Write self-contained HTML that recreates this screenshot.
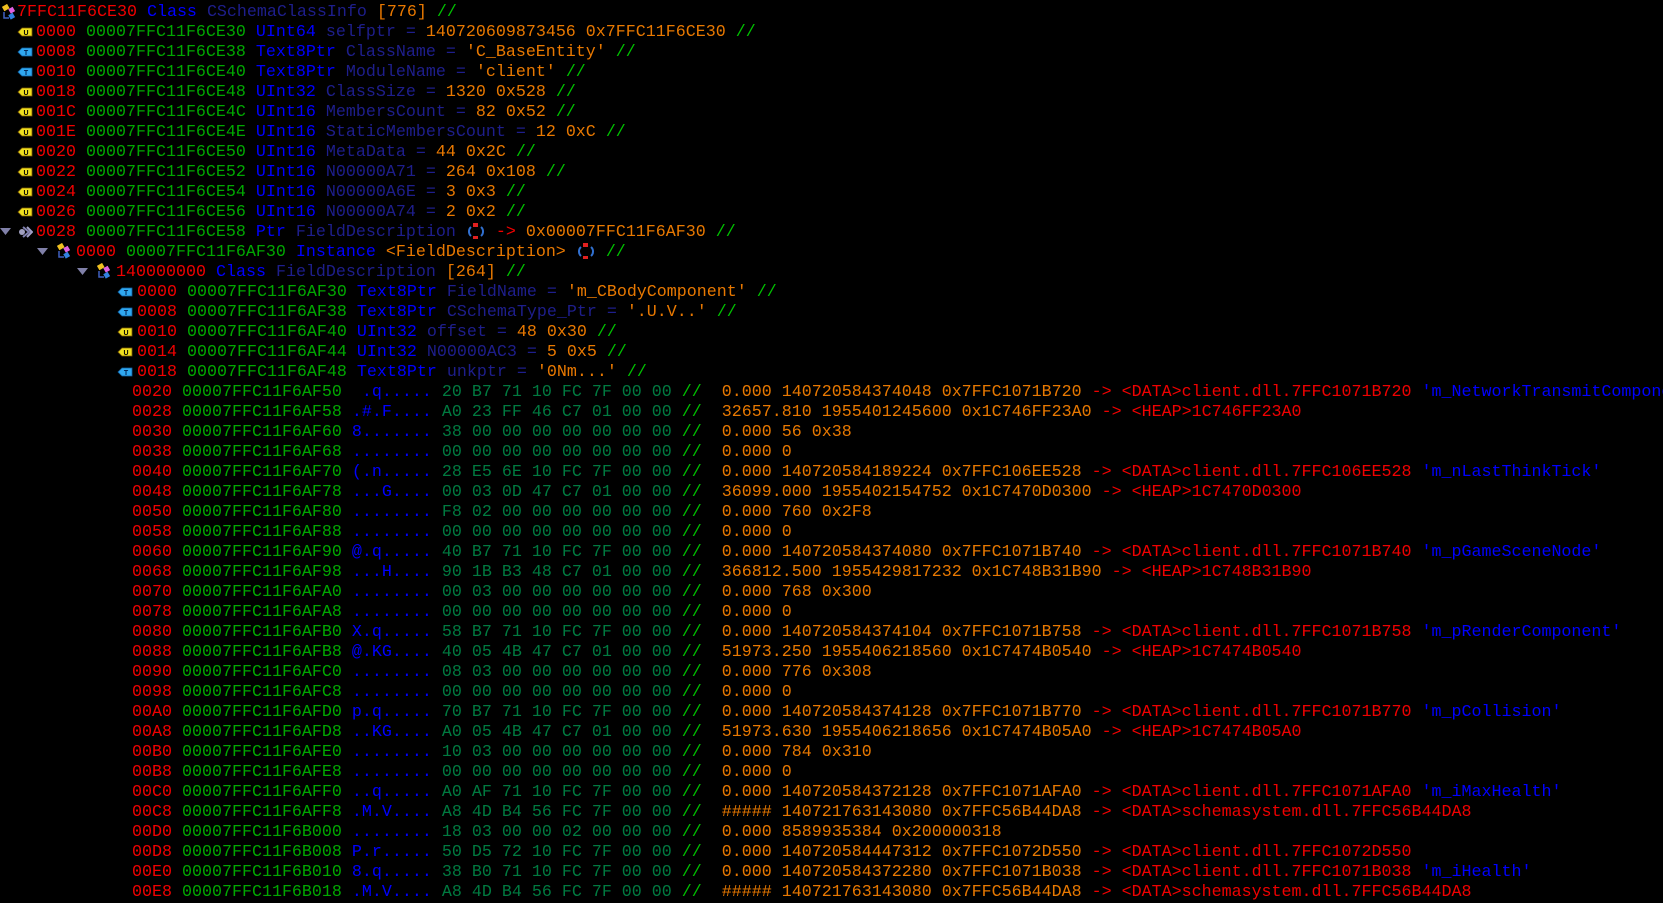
<!DOCTYPE html>
<html><head><meta charset="utf-8"><style>
html,body{margin:0;padding:0;background:#000;width:1663px;height:892px;overflow:hidden}
.row{position:absolute;margin-top:1px;height:20px;line-height:20px;white-space:pre;font-family:"Liberation Mono","Courier New",monospace;font-size:16.67px;color:#1e1e8c}
.r{color:#f00000}.g{color:#00a800}.b{color:#0000ff}.n{color:#1e1e8c}.o{color:#e87800}.c{color:#00c000}.h{color:#007a40}
.ic{position:absolute;width:16px;height:16px}
svg{display:block}
.inl{display:inline-block;width:20px;height:16px;vertical-align:-3px}
.x{left:132px}
</style></head><body>
<svg width="0" height="0" style="position:absolute"><defs>
<g id="U"><path d="M1 5 L5 1 H15 V9 H5 Z" fill="#f0e020" stroke="#806000" stroke-width="0.8"/><text x="9" y="8" font-size="7" font-family="Liberation Sans" font-weight="bold" fill="#000" text-anchor="middle">U</text></g>
<g id="T"><path d="M1 5 L5 1 H15 V9 H5 Z" fill="#30a8f0" stroke="#1060a0" stroke-width="0.8"/><text x="9" y="8" font-size="7" font-family="Liberation Sans" font-weight="bold" fill="#002050" text-anchor="middle">T</text></g>
<g id="C"><rect x="3" y="1" width="6" height="5" fill="#f0c020" transform="rotate(-30 6 4)"/><rect x="9" y="4" width="5" height="5" fill="#e060e0" transform="rotate(-30 11 6)"/><path d="M4 8 V14 H9" stroke="#4060c0" fill="none" stroke-width="1.5"/><rect x="9" y="10" width="5" height="5" fill="#3080e0" transform="rotate(-30 11 12)"/></g>
<g id="V"><path d="M0 4 H11 L5.5 11 Z" fill="#8080a8"/></g>
<g id="P"><circle cx="5" cy="8" r="3" fill="#a0a0c0"/><path d="M6 3 L12 8 L6 13" stroke="#8080b0" stroke-width="2" fill="none"/><path d="M10 3 L15 8 L10 13" stroke="#a0a0c8" stroke-width="2" fill="none"/></g>
<g id="R"><path d="M5 4 A6 6 0 0 0 5 13" stroke="#3070d0" stroke-width="2" fill="none"/><path d="M15 4 A6 6 0 0 1 15 13" stroke="#3070d0" stroke-width="2" fill="none"/><rect x="7" y="0" width="5" height="4" fill="#e02020"/><rect x="7" y="13" width="5" height="4" fill="#e02020"/></g>
</defs></svg>

<svg class="ic" style="left:0;top:4px"><use href="#C"/></svg>
<div class="row" style="left:17px;top:2px"><span class="r">7FFC11F6CE30</span> <span class="b">Class</span> <span class="n">CSchemaClassInfo</span> <span class="o">[776]</span> <span class="c">//</span></div>

<svg class="ic" style="left:17px;top:27px"><use href="#U"/></svg>
<div class="row" style="left:36px;top:22px"><span class="r">0000</span> <span class="g">00007FFC11F6CE30</span> <span class="b">UInt64</span> <span class="n">selfptr =</span> <span class="o">140720609873456 0x7FFC11F6CE30</span> <span class="c">//</span></div>
<svg class="ic" style="left:17px;top:47px"><use href="#T"/></svg>
<div class="row" style="left:36px;top:42px"><span class="r">0008</span> <span class="g">00007FFC11F6CE38</span> <span class="b">Text8Ptr</span> <span class="n">ClassName =</span> <span class="o">'C_BaseEntity'</span> <span class="c">//</span></div>
<svg class="ic" style="left:17px;top:67px"><use href="#T"/></svg>
<div class="row" style="left:36px;top:62px"><span class="r">0010</span> <span class="g">00007FFC11F6CE40</span> <span class="b">Text8Ptr</span> <span class="n">ModuleName =</span> <span class="o">'client'</span> <span class="c">//</span></div>
<svg class="ic" style="left:17px;top:87px"><use href="#U"/></svg>
<div class="row" style="left:36px;top:82px"><span class="r">0018</span> <span class="g">00007FFC11F6CE48</span> <span class="b">UInt32</span> <span class="n">ClassSize =</span> <span class="o">1320 0x528</span> <span class="c">//</span></div>
<svg class="ic" style="left:17px;top:107px"><use href="#U"/></svg>
<div class="row" style="left:36px;top:102px"><span class="r">001C</span> <span class="g">00007FFC11F6CE4C</span> <span class="b">UInt16</span> <span class="n">MembersCount =</span> <span class="o">82 0x52</span> <span class="c">//</span></div>
<svg class="ic" style="left:17px;top:127px"><use href="#U"/></svg>
<div class="row" style="left:36px;top:122px"><span class="r">001E</span> <span class="g">00007FFC11F6CE4E</span> <span class="b">UInt16</span> <span class="n">StaticMembersCount =</span> <span class="o">12 0xC</span> <span class="c">//</span></div>
<svg class="ic" style="left:17px;top:147px"><use href="#U"/></svg>
<div class="row" style="left:36px;top:142px"><span class="r">0020</span> <span class="g">00007FFC11F6CE50</span> <span class="b">UInt16</span> <span class="n">MetaData =</span> <span class="o">44 0x2C</span> <span class="c">//</span></div>
<svg class="ic" style="left:17px;top:167px"><use href="#U"/></svg>
<div class="row" style="left:36px;top:162px"><span class="r">0022</span> <span class="g">00007FFC11F6CE52</span> <span class="b">UInt16</span> <span class="n">N00000A71 =</span> <span class="o">264 0x108</span> <span class="c">//</span></div>
<svg class="ic" style="left:17px;top:187px"><use href="#U"/></svg>
<div class="row" style="left:36px;top:182px"><span class="r">0024</span> <span class="g">00007FFC11F6CE54</span> <span class="b">UInt16</span> <span class="n">N00000A6E =</span> <span class="o">3 0x3</span> <span class="c">//</span></div>
<svg class="ic" style="left:17px;top:207px"><use href="#U"/></svg>
<div class="row" style="left:36px;top:202px"><span class="r">0026</span> <span class="g">00007FFC11F6CE56</span> <span class="b">UInt16</span> <span class="n">N00000A74 =</span> <span class="o">2 0x2</span> <span class="c">//</span></div>

<svg class="ic" style="left:0;top:224px"><use href="#V"/></svg>
<svg class="ic" style="left:17px;top:224px"><use href="#P"/></svg>
<div class="row" style="left:36px;top:222px"><span class="r">0028</span> <span class="g">00007FFC11F6CE58</span> <span class="b">Ptr</span> <span class="n">FieldDescription</span> <svg class="inl"><use href="#R"/></svg> <span class="r">-&gt;</span> <span class="o">0x00007FFC11F6AF30</span> <span class="c">//</span></div>

<svg class="ic" style="left:37px;top:244px"><use href="#V"/></svg>
<svg class="ic" style="left:55px;top:243px"><use href="#C"/></svg>
<div class="row" style="left:76px;top:242px"><span class="r">0000</span> <span class="g">00007FFC11F6AF30</span> <span class="b">Instance</span> <span class="o">&lt;FieldDescription&gt;</span> <svg class="inl"><use href="#R"/></svg> <span class="c">//</span></div>

<svg class="ic" style="left:77px;top:264px"><use href="#V"/></svg>
<svg class="ic" style="left:95px;top:263px"><use href="#C"/></svg>
<div class="row" style="left:116px;top:262px"><span class="r">140000000</span> <span class="b">Class</span> <span class="n">FieldDescription</span> <span class="o">[264]</span> <span class="c">//</span></div>

<svg class="ic" style="left:117px;top:287px"><use href="#T"/></svg>
<div class="row" style="left:137px;top:282px"><span class="r">0000</span> <span class="g">00007FFC11F6AF30</span> <span class="b">Text8Ptr</span> <span class="n">FieldName =</span> <span class="o">'m_CBodyComponent'</span> <span class="c">//</span></div>
<svg class="ic" style="left:117px;top:307px"><use href="#T"/></svg>
<div class="row" style="left:137px;top:302px"><span class="r">0008</span> <span class="g">00007FFC11F6AF38</span> <span class="b">Text8Ptr</span> <span class="n">CSchemaType_Ptr =</span> <span class="o">'.U.V..'</span> <span class="c">//</span></div>
<svg class="ic" style="left:117px;top:327px"><use href="#U"/></svg>
<div class="row" style="left:137px;top:322px"><span class="r">0010</span> <span class="g">00007FFC11F6AF40</span> <span class="b">UInt32</span> <span class="n">offset =</span> <span class="o">48 0x30</span> <span class="c">//</span></div>
<svg class="ic" style="left:117px;top:347px"><use href="#U"/></svg>
<div class="row" style="left:137px;top:342px"><span class="r">0014</span> <span class="g">00007FFC11F6AF44</span> <span class="b">UInt32</span> <span class="n">N00000AC3 =</span> <span class="o">5 0x5</span> <span class="c">//</span></div>
<svg class="ic" style="left:117px;top:367px"><use href="#T"/></svg>
<div class="row" style="left:137px;top:362px"><span class="r">0018</span> <span class="g">00007FFC11F6AF48</span> <span class="b">Text8Ptr</span> <span class="n">unkptr =</span> <span class="o">'0Nm...'</span> <span class="c">//</span></div>

<div class="row x" style="top:382px"><span class="r">0020</span> <span class="g">00007FFC11F6AF50</span> <span class="b"> .q.....</span> <span class="h">20 B7 71 10 FC 7F 00 00</span> <span class="c">//</span>  <span class="o">0.000 140720584374048 0x7FFC1071B720</span> <span class="r">-&gt; &lt;DATA&gt;client.dll.7FFC1071B720</span> <span class="b">'m_NetworkTransmitComponent'</span></div>
<div class="row x" style="top:402px"><span class="r">0028</span> <span class="g">00007FFC11F6AF58</span> <span class="b">.#.F....</span> <span class="h">A0 23 FF 46 C7 01 00 00</span> <span class="c">//</span>  <span class="o">32657.810 1955401245600 0x1C746FF23A0</span> <span class="r">-&gt; &lt;HEAP&gt;1C746FF23A0</span></div>
<div class="row x" style="top:422px"><span class="r">0030</span> <span class="g">00007FFC11F6AF60</span> <span class="b">8.......</span> <span class="h">38 00 00 00 00 00 00 00</span> <span class="c">//</span>  <span class="o">0.000 56 0x38</span></div>
<div class="row x" style="top:442px"><span class="r">0038</span> <span class="g">00007FFC11F6AF68</span> <span class="b">........</span> <span class="h">00 00 00 00 00 00 00 00</span> <span class="c">//</span>  <span class="o">0.000 0</span></div>
<div class="row x" style="top:462px"><span class="r">0040</span> <span class="g">00007FFC11F6AF70</span> <span class="b">(.n.....</span> <span class="h">28 E5 6E 10 FC 7F 00 00</span> <span class="c">//</span>  <span class="o">0.000 140720584189224 0x7FFC106EE528</span> <span class="r">-&gt; &lt;DATA&gt;client.dll.7FFC106EE528</span> <span class="b">'m_nLastThinkTick'</span></div>
<div class="row x" style="top:482px"><span class="r">0048</span> <span class="g">00007FFC11F6AF78</span> <span class="b">...G....</span> <span class="h">00 03 0D 47 C7 01 00 00</span> <span class="c">//</span>  <span class="o">36099.000 1955402154752 0x1C7470D0300</span> <span class="r">-&gt; &lt;HEAP&gt;1C7470D0300</span></div>
<div class="row x" style="top:502px"><span class="r">0050</span> <span class="g">00007FFC11F6AF80</span> <span class="b">........</span> <span class="h">F8 02 00 00 00 00 00 00</span> <span class="c">//</span>  <span class="o">0.000 760 0x2F8</span></div>
<div class="row x" style="top:522px"><span class="r">0058</span> <span class="g">00007FFC11F6AF88</span> <span class="b">........</span> <span class="h">00 00 00 00 00 00 00 00</span> <span class="c">//</span>  <span class="o">0.000 0</span></div>
<div class="row x" style="top:542px"><span class="r">0060</span> <span class="g">00007FFC11F6AF90</span> <span class="b">@.q.....</span> <span class="h">40 B7 71 10 FC 7F 00 00</span> <span class="c">//</span>  <span class="o">0.000 140720584374080 0x7FFC1071B740</span> <span class="r">-&gt; &lt;DATA&gt;client.dll.7FFC1071B740</span> <span class="b">'m_pGameSceneNode'</span></div>
<div class="row x" style="top:562px"><span class="r">0068</span> <span class="g">00007FFC11F6AF98</span> <span class="b">...H....</span> <span class="h">90 1B B3 48 C7 01 00 00</span> <span class="c">//</span>  <span class="o">366812.500 1955429817232 0x1C748B31B90</span> <span class="r">-&gt; &lt;HEAP&gt;1C748B31B90</span></div>
<div class="row x" style="top:582px"><span class="r">0070</span> <span class="g">00007FFC11F6AFA0</span> <span class="b">........</span> <span class="h">00 03 00 00 00 00 00 00</span> <span class="c">//</span>  <span class="o">0.000 768 0x300</span></div>
<div class="row x" style="top:602px"><span class="r">0078</span> <span class="g">00007FFC11F6AFA8</span> <span class="b">........</span> <span class="h">00 00 00 00 00 00 00 00</span> <span class="c">//</span>  <span class="o">0.000 0</span></div>
<div class="row x" style="top:622px"><span class="r">0080</span> <span class="g">00007FFC11F6AFB0</span> <span class="b">X.q.....</span> <span class="h">58 B7 71 10 FC 7F 00 00</span> <span class="c">//</span>  <span class="o">0.000 140720584374104 0x7FFC1071B758</span> <span class="r">-&gt; &lt;DATA&gt;client.dll.7FFC1071B758</span> <span class="b">'m_pRenderComponent'</span></div>
<div class="row x" style="top:642px"><span class="r">0088</span> <span class="g">00007FFC11F6AFB8</span> <span class="b">@.KG....</span> <span class="h">40 05 4B 47 C7 01 00 00</span> <span class="c">//</span>  <span class="o">51973.250 1955406218560 0x1C7474B0540</span> <span class="r">-&gt; &lt;HEAP&gt;1C7474B0540</span></div>
<div class="row x" style="top:662px"><span class="r">0090</span> <span class="g">00007FFC11F6AFC0</span> <span class="b">........</span> <span class="h">08 03 00 00 00 00 00 00</span> <span class="c">//</span>  <span class="o">0.000 776 0x308</span></div>
<div class="row x" style="top:682px"><span class="r">0098</span> <span class="g">00007FFC11F6AFC8</span> <span class="b">........</span> <span class="h">00 00 00 00 00 00 00 00</span> <span class="c">//</span>  <span class="o">0.000 0</span></div>
<div class="row x" style="top:702px"><span class="r">00A0</span> <span class="g">00007FFC11F6AFD0</span> <span class="b">p.q.....</span> <span class="h">70 B7 71 10 FC 7F 00 00</span> <span class="c">//</span>  <span class="o">0.000 140720584374128 0x7FFC1071B770</span> <span class="r">-&gt; &lt;DATA&gt;client.dll.7FFC1071B770</span> <span class="b">'m_pCollision'</span></div>
<div class="row x" style="top:722px"><span class="r">00A8</span> <span class="g">00007FFC11F6AFD8</span> <span class="b">..KG....</span> <span class="h">A0 05 4B 47 C7 01 00 00</span> <span class="c">//</span>  <span class="o">51973.630 1955406218656 0x1C7474B05A0</span> <span class="r">-&gt; &lt;HEAP&gt;1C7474B05A0</span></div>
<div class="row x" style="top:742px"><span class="r">00B0</span> <span class="g">00007FFC11F6AFE0</span> <span class="b">........</span> <span class="h">10 03 00 00 00 00 00 00</span> <span class="c">//</span>  <span class="o">0.000 784 0x310</span></div>
<div class="row x" style="top:762px"><span class="r">00B8</span> <span class="g">00007FFC11F6AFE8</span> <span class="b">........</span> <span class="h">00 00 00 00 00 00 00 00</span> <span class="c">//</span>  <span class="o">0.000 0</span></div>
<div class="row x" style="top:782px"><span class="r">00C0</span> <span class="g">00007FFC11F6AFF0</span> <span class="b">..q.....</span> <span class="h">A0 AF 71 10 FC 7F 00 00</span> <span class="c">//</span>  <span class="o">0.000 140720584372128 0x7FFC1071AFA0</span> <span class="r">-&gt; &lt;DATA&gt;client.dll.7FFC1071AFA0</span> <span class="b">'m_iMaxHealth'</span></div>
<div class="row x" style="top:802px"><span class="r">00C8</span> <span class="g">00007FFC11F6AFF8</span> <span class="b">.M.V....</span> <span class="h">A8 4D B4 56 FC 7F 00 00</span> <span class="c">//</span>  <span class="o">##### 140721763143080 0x7FFC56B44DA8</span> <span class="r">-&gt; &lt;DATA&gt;schemasystem.dll.7FFC56B44DA8</span></div>
<div class="row x" style="top:822px"><span class="r">00D0</span> <span class="g">00007FFC11F6B000</span> <span class="b">........</span> <span class="h">18 03 00 00 02 00 00 00</span> <span class="c">//</span>  <span class="o">0.000 8589935384 0x200000318</span></div>
<div class="row x" style="top:842px"><span class="r">00D8</span> <span class="g">00007FFC11F6B008</span> <span class="b">P.r.....</span> <span class="h">50 D5 72 10 FC 7F 00 00</span> <span class="c">//</span>  <span class="o">0.000 140720584447312 0x7FFC1072D550</span> <span class="r">-&gt; &lt;DATA&gt;client.dll.7FFC1072D550</span></div>
<div class="row x" style="top:862px"><span class="r">00E0</span> <span class="g">00007FFC11F6B010</span> <span class="b">8.q.....</span> <span class="h">38 B0 71 10 FC 7F 00 00</span> <span class="c">//</span>  <span class="o">0.000 140720584372280 0x7FFC1071B038</span> <span class="r">-&gt; &lt;DATA&gt;client.dll.7FFC1071B038</span> <span class="b">'m_iHealth'</span></div>
<div class="row x" style="top:882px"><span class="r">00E8</span> <span class="g">00007FFC11F6B018</span> <span class="b">.M.V....</span> <span class="h">A8 4D B4 56 FC 7F 00 00</span> <span class="c">//</span>  <span class="o">##### 140721763143080 0x7FFC56B44DA8</span> <span class="r">-&gt; &lt;DATA&gt;schemasystem.dll.7FFC56B44DA8</span></div>
</body></html>
